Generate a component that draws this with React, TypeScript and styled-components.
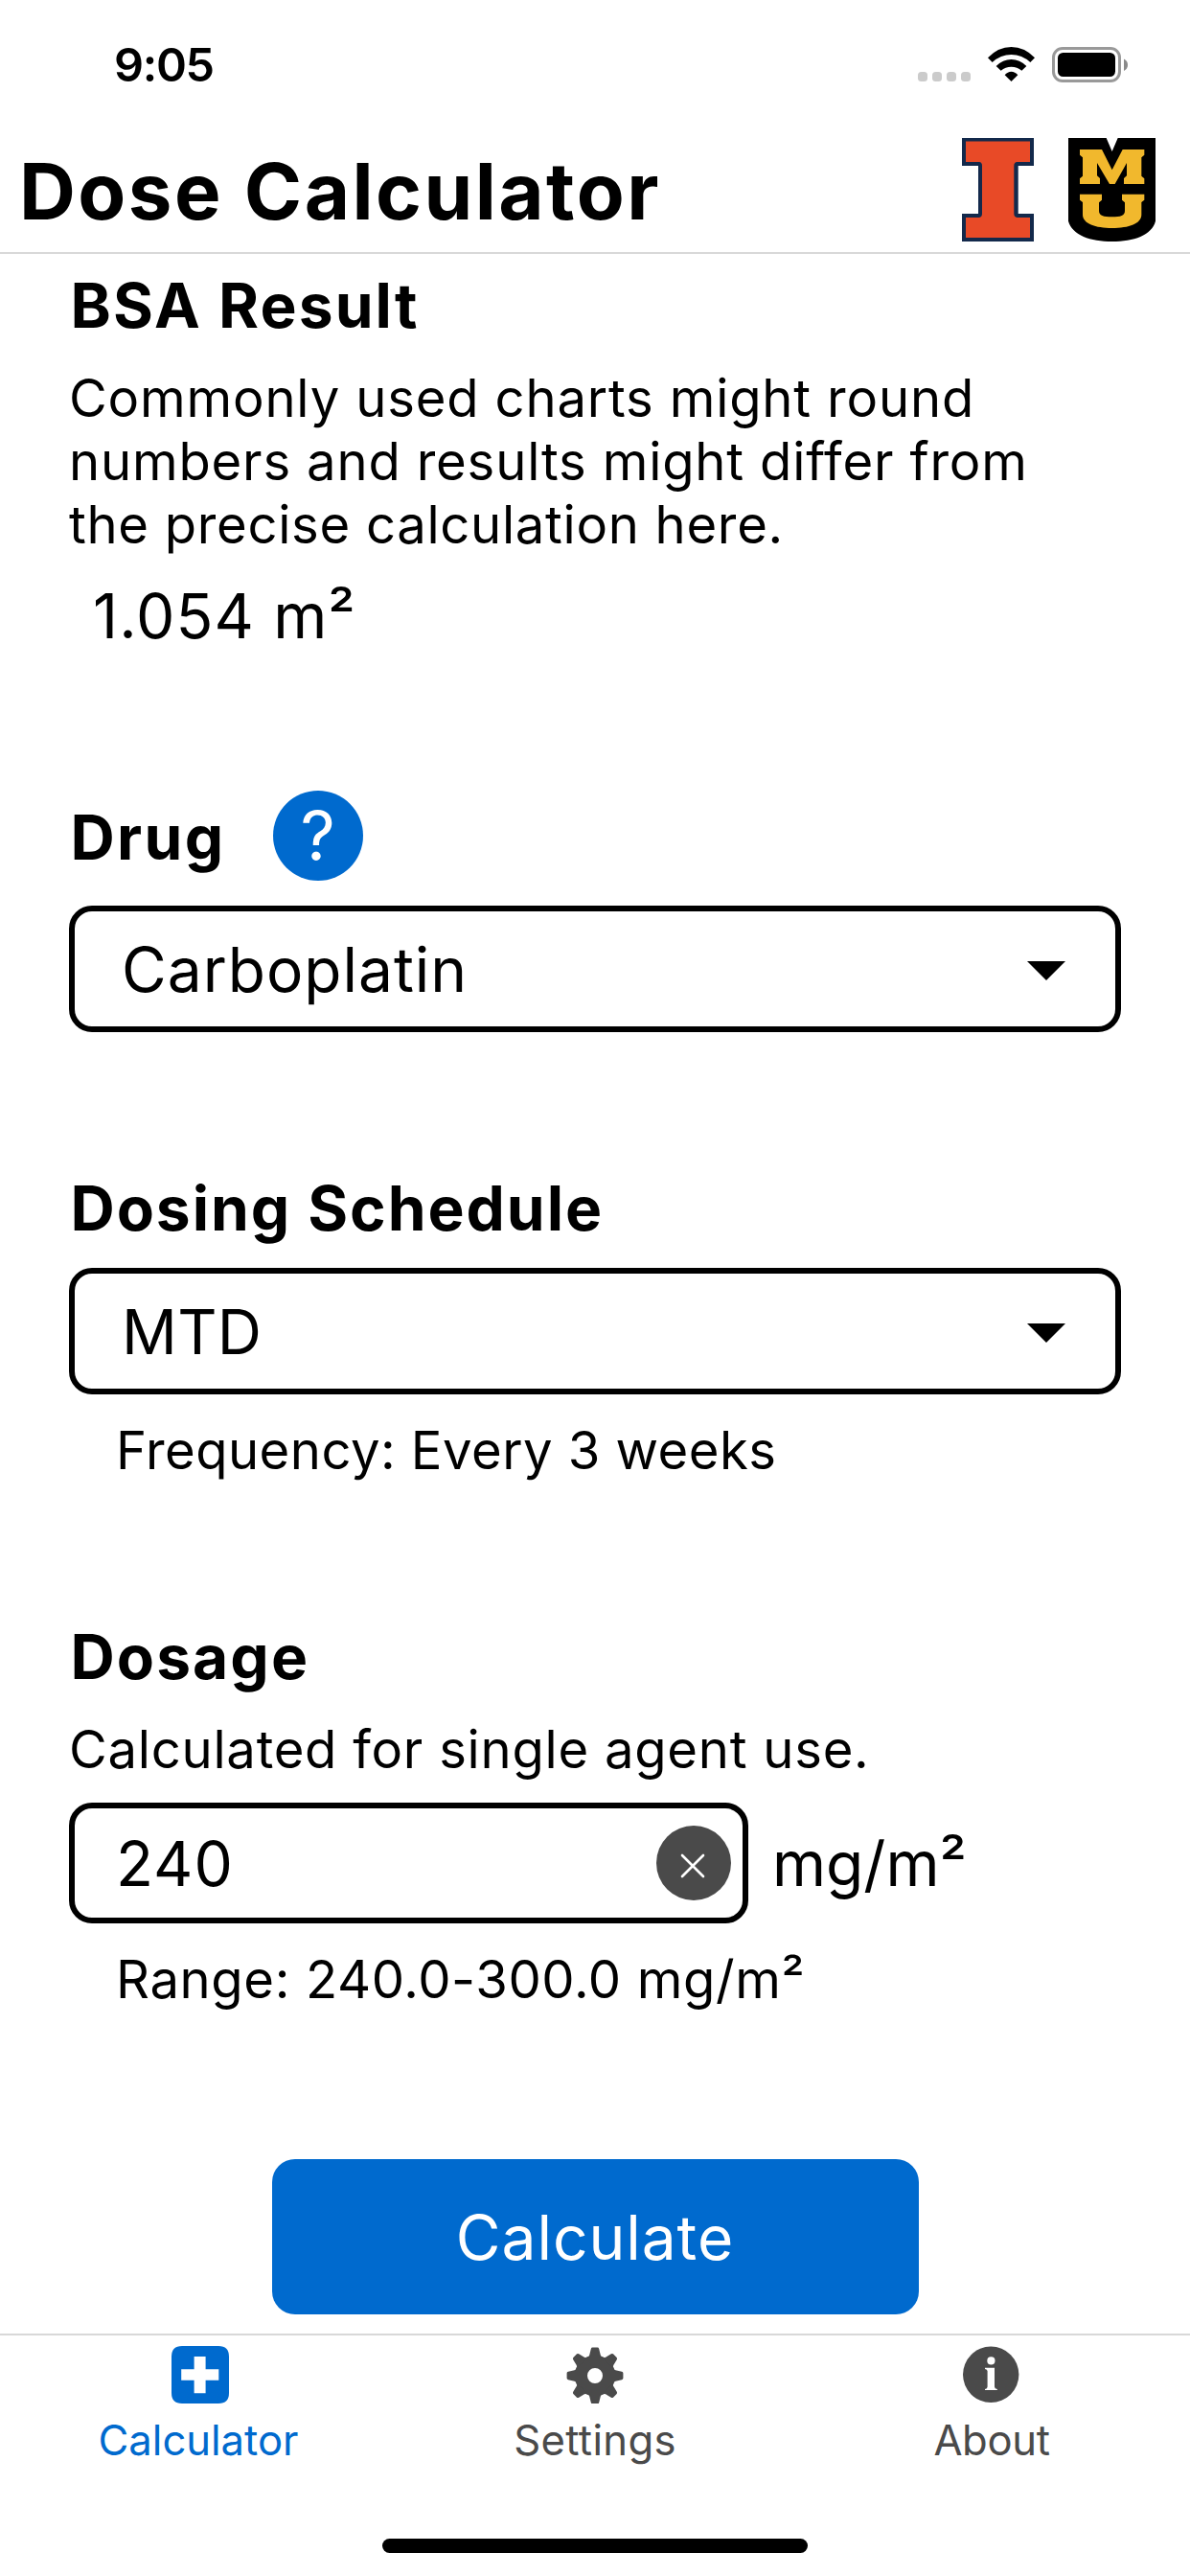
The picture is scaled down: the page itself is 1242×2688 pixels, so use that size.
import React from "react";
import styled, { createGlobalStyle } from "styled-components";

const BLUE = "#006ace";
const GRAY = "#4a4a4a";

const GlobalStyle = createGlobalStyle`
  * { box-sizing: border-box; }
  body { margin: 0; background: #fff; }
  button { font: inherit; color: inherit; }
`;

const Screen = styled.div`
  display: flex;
  flex-direction: column;
  width: 1242px;
  height: 2688px;
  overflow: hidden;
  background: #fff;
  color: #000;
  font-family: Inter, "Liberation Sans", sans-serif;
`;

const StatusBar = styled.div`
  display: flex;
  flex: none;
  align-items: center;
  justify-content: space-between;
  height: 135px;
  padding: 0 65px 0 119px;
`;

const Time = styled.span`
  font-size: 48.5px;
  font-weight: 600;
  line-height: 60px;
  letter-spacing: -1.3px;
`;

const StatusIcons = styled.div`
  display: flex;
  align-items: center;
`;

const SignalDots = styled.div`
  display: flex;
  gap: 5px;
  margin: 25px 18px 0 0;
`;

const Dot = styled.span`
  width: 10px;
  height: 10px;
  border-radius: 3.5px;
  background: #cbcbcb;
`;

const WifiIcon = styled.svg`
  width: 49px;
  height: 36px;
  margin: 0 18px 1px 0;
`;

const BatteryIcon = styled.svg`
  width: 79px;
  height: 37px;
`;

const Header = styled.header`
  display: flex;
  flex: none;
  align-items: center;
  justify-content: space-between;
  height: 130px;
  padding: 0 36px 2px 20px;
  border-bottom: 2px solid #d8d8d8;
`;

const Title = styled.h1`
  margin: 4px 0 0;
  font-size: 81.6px;
  font-weight: 700;
  line-height: 98px;
  letter-spacing: 2.45px;
`;

const Logos = styled.div`
  display: flex;
  gap: 36px;
`;

const Logo = styled.svg<{ $width: number }>`
  width: ${(p) => p.$width}px;
  height: 108px;
`;

const Content = styled.main`
  display: flex;
  flex: 1;
  flex-direction: column;
  padding: 15px 72px 0;
`;

const Section = styled.section<{ $gap: number }>`
  display: flex;
  flex-direction: column;
  margin-bottom: ${(p) => p.$gap}px;
`;

const Heading = styled.h2<{ $track?: number }>`
  margin: 0;
  padding-left: 1.5px;
  font-size: 64px;
  font-weight: 700;
  line-height: 77px;
  letter-spacing: ${(p) => p.$track ?? 2.1}px;
`;

const HeadingRow = styled.div`
  display: flex;
  align-items: center;
  gap: 49px;
  height: 94px;

  ${Heading} { padding-top: 3px; }
`;

const HelpButton = styled.button`
  display: flex;
  align-items: center;
  justify-content: center;
  width: 94px;
  height: 94px;
  padding: 0;
  border: 0;
  border-radius: 50%;
  background: ${BLUE};
  color: #fff;
  font-size: 71px;
  line-height: 84px;
`;

const Paragraph = styled.p<{ $track: number }>`
  margin: 25px 0 0;
  font-size: 54.4px;
  line-height: 66px;
  letter-spacing: ${(p) => p.$track}px;
  white-space: nowrap;
`;

const Line = styled.span<{ $track: number }>`
  display: block;
  letter-spacing: ${(p) => p.$track}px;
`;

const Hint = styled(Paragraph)`
  padding-left: 49px;
`;

const Result = styled.div`
  margin-top: 24px;
  padding-left: 25px;
  font-size: 64px;
  line-height: 77px;
  letter-spacing: 1.12px;
`;

const Select = styled.div<{ $track: number; $top: number }>`
  display: flex;
  align-items: center;
  justify-content: space-between;
  height: 132px;
  margin-top: ${(p) => p.$top}px;
  padding: 0 52px 0 49px;
  border: 6px solid #000;
  border-radius: 24px;
  font-size: 64px;
  line-height: 77px;
  letter-spacing: ${(p) => p.$track}px;
`;

const Caret = styled.span`
  margin-top: 4px;
  border: 20px solid transparent;
  border-top-color: #000;
  border-bottom-width: 0;
`;

const InputRow = styled.div`
  display: flex;
  align-items: center;
  gap: 25px;
  margin-top: 23px;
`;

const InputBox = styled.div`
  display: flex;
  align-items: center;
  justify-content: space-between;
  width: 709px;
  height: 126px;
  padding: 0 12px 0 43px;
  border: 6px solid #000;
  border-radius: 24px;
  font-size: 64px;
  line-height: 77px;
  letter-spacing: 1px;
`;

const ClearButton = styled.button`
  display: flex;
  align-items: center;
  justify-content: center;
  width: 78px;
  height: 78px;
  padding: 5px 2px 0 0;
  border: 0;
  border-radius: 50%;
  background: ${GRAY};
`;

const Unit = styled.span`
  padding-top: 1px;
  font-size: 64px;
  line-height: 77px;
`;

const CalculateButton = styled.button`
  align-self: center;
  width: 675px;
  height: 162px;
  padding: 1px 0 0;
  border: 0;
  border-radius: 24px;
  background: ${BLUE};
  color: #fff;
  font-size: 64px;
  line-height: 77px;
  letter-spacing: 0.97px;
`;

const TabBar = styled.nav`
  display: grid;
  flex: none;
  grid-template-columns: repeat(3, 1fr);
  height: 214px;
  border-top: 2px solid #d8d8d8;
`;

const Tab = styled.div<{ $active?: boolean; $track: number }>`
  display: flex;
  flex-direction: column;
  align-items: center;
  gap: 12px;
  padding-top: 11px;
  color: ${(p) => (p.$active ? BLUE : GRAY)};
  font-size: 43.6px;
  line-height: 54px;
  letter-spacing: ${(p) => p.$track}px;
`;

const TabIcon = styled.svg`
  width: 64px;
  height: 60px;
  fill: currentColor;
`;

const HomeArea = styled.div`
  display: flex;
  flex: none;
  justify-content: center;
  height: 39px;
`;

const HomeIndicator = styled.span`
  width: 444px;
  height: 15px;
  border-radius: 8px;
  background: #000;
`;

const TEETH = [0, 45, 90, 135, 180, 225, 270, 315];

export default function App() {
  return (
    <Screen>
      <GlobalStyle />
      <StatusBar>
        <Time>9:05</Time>
        <StatusIcons>
          <SignalDots>
            <Dot /><Dot /><Dot /><Dot />
          </SignalDots>
          <WifiIcon viewBox="393 87 147 108" preserveAspectRatio="none">
            <path d="M393 121Q425 87 466.5 87Q508 87 540 121L526 135Q500 111 466.5 111Q433 111 407 135Z" />
            <path d="M419 147Q440 126 466.5 126Q493 126 514 147L499 161Q485 149 466.5 149Q448 149 434 161Z" />
            <path d="M446 175Q455 164 466.5 164Q478 164 487 175L466.5 195Z" />
          </WifiIcon>
          <BatteryIcon viewBox="0 0 79 37">
            <rect x="1.5" y="1.5" width="69" height="34" rx="9.5" fill="none" stroke="#999" strokeWidth="3" />
            <rect x="6" y="6" width="60" height="25" rx="5.5" />
            <path d="M75 12.5Q79 14.5 79 18.8Q79 23 75 25Z" fill="#8a8a8a" />
          </BatteryIcon>
        </StatusIcons>
      </StatusBar>

      <Header>
        <Title>Dose Calculator</Title>
        <Logos>
          <Logo $width={75} viewBox="0 0 75 108">
            <path fill="#13294b" d="M0 0H75V29H58.7V79H75V108H0V79H17V29H0Z" />
            <path fill="#e84a27" d="M4 3.5H71V25H57.5Q54.3 25.3 54.3 29V79Q54.3 82.6 57.5 83H71V104H4V83H18Q21 82.6 21 79V29Q21 25.3 18 25H4Z" />
          </Logo>
          <Logo $width={91} viewBox="645 372 273 324">
            <path d="M645 372H764L782 414L800 372H918V632C906 676 850 696 782 696C714 696 658 676 645 632Z" />
            <path fill="#f1b82d" d="M681 408H750L782 472L815 408H883V425L874 433V491L883 499V516H819V498L828 490V450L791 516H774L735 450V490L744 498V516H681V499L690 491V433L681 425Z" />
            <path fill="#f1b82d" d="M681 548H750V566L741 574V600C741 615 755 619 782 619C809 619 822 615 822 600V574L813 566V548H883V566L874 573V612C874 640 835 654 782 654C730 654 690 640 690 612V573L681 566Z" />
          </Logo>
        </Logos>
      </Header>

      <Content>
        <Section $gap={144}>
          <Heading>BSA Result</Heading>
          <Paragraph $track={0.83}>
            <Line $track={0.83}>Commonly used charts might round</Line>
            <Line $track={0.83}>numbers and results might differ from</Line>
            <Line $track={0.7}>the precise calculation here.</Line>
          </Paragraph>
          <Result>1.054 m²</Result>
        </Section>

        <Section $gap={145}>
          <HeadingRow>
            <Heading $track={2.4}>Drug</Heading>
            <HelpButton>?</HelpButton>
          </HeadingRow>
          <Select $track={0.99} $top={26}>
            Carboplatin
            <Caret />
          </Select>
        </Section>

        <Section $gap={144}>
          <Heading $track={1.95}>Dosing Schedule</Heading>
          <Select $track={0.34} $top={24}>
            MTD
            <Caret />
          </Select>
          <Hint $track={0.47}>Frequency: Every 3 weeks</Hint>
        </Section>

        <Section $gap={155}>
          <Heading>Dosage</Heading>
          <Paragraph $track={0.75}>Calculated for single agent use.</Paragraph>
          <InputRow>
            <InputBox>
              240
              <ClearButton>
                <svg width="26" height="26" viewBox="0 0 26 26" fill="none" stroke="#fff" strokeWidth="2.6" strokeLinecap="round">
                  <path d="M2 2L24 24M24 2L2 24" />
                </svg>
              </ClearButton>
            </InputBox>
            <Unit>mg/m²</Unit>
          </InputRow>
          <Hint $track={0.64}>Range: 240.0-300.0 mg/m²</Hint>
        </Section>

        <CalculateButton>Calculate</CalculateButton>
      </Content>

      <TabBar>
        <Tab $active $track={0}>
          <TabIcon viewBox="0 0 64 60">
            <path fillRule="evenodd" d="M15 0H53Q64 0 64 11V49Q64 60 53 60H15Q4 60 4 49V11Q4 0 15 0ZM27.6 11V24.2H14.2V35.8H27.6V49.2H39.6V35.8H53.3V24.2H39.6V11Z" />
          </TabIcon>
          Calculator
        </Tab>
        <Tab $track={0.34}>
          <TabIcon viewBox="-32 -31 64 60">
            <circle r="14.6" fill="none" stroke="currentColor" strokeWidth="13.2" />
            {TEETH.map((angle) => (
              <path key={angle} transform={`rotate(${angle})`} d="M-8 -18.5Q-6.3 -20 -5.8 -21.5L-4.2 -28Q-3.8 -29.4 -2.6 -29.4H2.6Q3.8 -29.4 4.2 -28L5.8 -21.5Q6.3 -20 8 -18.5Z" />
            ))}
          </TabIcon>
          Settings
        </Tab>
        <Tab $track={-0.35}>
          <TabIcon viewBox="0 0 64 60">
            <circle cx="31.2" cy="29.8" r="29.2" />
            <circle cx="31.4" cy="15.4" r="4.1" fill="#fff" />
            <path fill="#fff" d="M25 22.8H35V42.5Q35 44.6 37.8 44.9V46H25V44.9Q27.6 44.6 27.6 42.5V26.2Q27.6 24.2 25 23.9Z" />
          </TabIcon>
          About
        </Tab>
      </TabBar>

      <HomeArea>
        <HomeIndicator />
      </HomeArea>
    </Screen>
  );
}
